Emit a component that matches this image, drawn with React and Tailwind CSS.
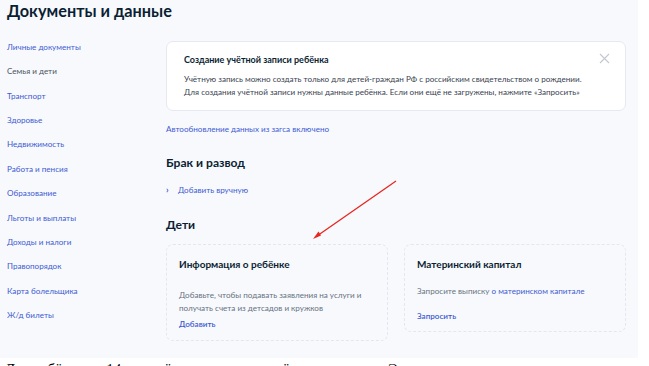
import React from 'react'

const menu = [
  { label: 'Личные документы' },
  { label: 'Семья и дети', active: true },
  { label: 'Транспорт' },
  { label: 'Здоровье' },
  { label: 'Недвижимость' },
  { label: 'Работа и пенсия' },
  { label: 'Образование' },
  { label: 'Льготы и выплаты' },
  { label: 'Доходы и налоги' },
  { label: 'Правопорядок' },
  { label: 'Карта болельщика' },
  { label: 'Ж/д билеты' },
]

const App = () => {
  return (
    <div className="relative w-[649px] h-[366px] overflow-hidden bg-white font-['Lato','Noto_Sans',sans-serif]">
      <div className="w-[638px] h-[358px] bg-[#f8f9fd]">
        {/* Заголовок */}
        <h1 className="pl-[7px] pt-[1px] text-[16.3px] leading-[20px] font-bold text-[#0b1f33]">
          Документы и данные
        </h1>

        <div className="flex mt-[20px]">
          {/* Меню */}
          <ul className="w-[166px] shrink-0 pl-[7px]">
            {menu.map((item) => (
              <li
                key={item.label}
                className={`h-[24.36px] text-[8.1px] leading-[12px] ${item.active ? 'text-[#4a5360]' : 'text-[#3d5bd1]'}`}
              >
                {item.label}
              </li>
            ))}
          </ul>

          {/* Контент */}
          <div className="w-[460px]">
            <div className="relative h-[70px] rounded-[7px] border border-[#e6e9f0] bg-white pl-[17px] pt-[11px]">
              <div className="text-[9px] leading-[13px] font-bold text-[#0b1f33]">
                Создание учётной записи ребёнка
              </div>
              <div className="mt-[7px] text-[8.1px] leading-[12.5px] text-[#3a4350]">
                <p>Учётную запись можно создать только для детей-граждан РФ с российским свидетельством о рождении.</p>
                <p>Для создания учётной записи нужны данные ребёнка. Если они ещё не загружены, нажмите «Запросить»</p>
              </div>
              <svg className="absolute right-[15px] top-[11px]" width="11" height="11" viewBox="0 0 11 11">
                <path d="M1 1 L10 10 M10 1 L1 10" stroke="#c2c7d0" strokeWidth="1.1" fill="none" />
              </svg>
            </div>

            <div className="mt-[12px] text-[8.1px] leading-[12px] text-[#3d5bd1]">
              Автообновление данных из загса включено
            </div>

            <h2 className="mt-[19px] text-[12.1px] leading-[17px] font-bold text-[#0b1f33]">
              Брак и развод
            </h2>
            <div className="mt-[13px] flex items-center text-[8.1px] leading-[12px] text-[#3d5bd1]">
              <span className="w-[12px] text-[9px] font-bold">›</span>
              <span>Добавить вручную</span>
            </div>

            <h2 className="mt-[20px] text-[12.1px] leading-[17px] font-bold text-[#0b1f33]">
              Дети
            </h2>

            <div className="mt-[11px] flex items-start gap-[16px]">
              <div className="w-[222px] h-[97px] rounded-[7px] border border-dashed border-[#e3e7f0] pl-[12px] pt-[12px]">
                <div className="text-[10px] leading-[14px] font-bold text-[#0b1f33]">
                  Информация о ребёнке
                </div>
                <div className="mt-[18px] text-[8.1px] leading-[13px] text-[#66727f]">
                  <p>Добавьте, чтобы подавать заявления на услуги и</p>
                  <p>получать счета из детсадов и кружков</p>
                </div>
                <div className="mt-[3px] text-[8.1px] leading-[12px] font-semibold text-[#3d5bd1]">
                  Добавить
                </div>
              </div>

              <div className="w-[222px] h-[88px] rounded-[7px] border border-dashed border-[#e3e7f0] pl-[12px] pt-[12px]">
                <div className="text-[10px] leading-[14px] font-bold text-[#0b1f33]">
                  Материнский капитал
                </div>
                <div className="mt-[14px] text-[8.1px] leading-[12px] text-[#66727f]">
                  Запросите выписку <span className="text-[#3d5bd1]">о материнском капитале</span>
                </div>
                <div className="mt-[13px] text-[8.1px] leading-[12px] font-semibold text-[#3d5bd1]">
                  Запросить
                </div>
              </div>
            </div>
          </div>
        </div>
      </div>

      {/* Обрезанная строка текста ниже */}
      <div className="pl-[5px] pt-[2px] text-[15px] leading-[18px] text-black font-['Liberation_Serif',serif]">
        Для ребёнка до 14 лет учётная запись создаётся родителем. Это
      </div>

      {/* Стрелка */}
      <svg className="absolute left-0 top-0 pointer-events-none" width="649" height="366">
        <line x1="396" y1="181" x2="317" y2="236" stroke="#e8261f" strokeWidth="1.3" />
        <path d="M313 239 L318.5 231.5 L321 235.5 Z" fill="#e8261f" />
      </svg>
    </div>
  )
}

export default App
